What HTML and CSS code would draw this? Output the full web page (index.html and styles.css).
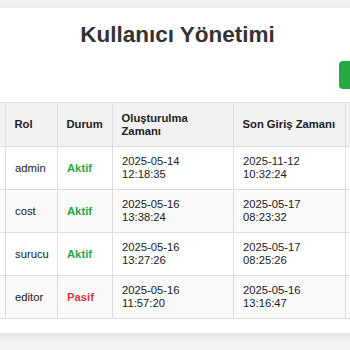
FILE: index.html
```html
<!DOCTYPE html>
<html lang="tr">
<head>
<meta charset="utf-8">
<title>Kullanıcı Yönetimi</title>
<link rel="stylesheet" href="styles.css">
</head>
<body>
<div class="page">
  <h1 class="title">Kullanıcı Yönetimi</h1>
  <div class="toolbar">
    <button class="btn-add">Yeni Kullanıcı Ekle</button>
  </div>
  <table class="users">
    <colgroup>
      <col class="c-id">
      <col class="c-name">
      <col class="c-role">
      <col class="c-status">
      <col class="c-created">
      <col class="c-login">
      <col class="c-actions">
    </colgroup>
    <thead>
      <tr>
        <th>ID</th>
        <th>Kullanıcı Adı</th>
        <th>Rol</th>
        <th>Durum</th>
        <th>Oluşturulma Zamanı</th>
        <th>Son Giriş Zamanı</th>
        <th>İşlemler</th>
      </tr>
    </thead>
    <tbody>
      <tr>
        <td>1</td><td>admin</td><td>admin</td>
        <td><span class="st active">Aktif</span></td>
        <td>2025-05-14 12:18:35</td><td>2025-11-12 10:32:24</td><td>Düzenle</td>
      </tr>
      <tr>
        <td>2</td><td>cost</td><td>cost</td>
        <td><span class="st active">Aktif</span></td>
        <td>2025-05-16 13:38:24</td><td>2025-05-17 08:23:32</td><td>Düzenle</td>
      </tr>
      <tr>
        <td>3</td><td>surucu</td><td>surucu</td>
        <td><span class="st active">Aktif</span></td>
        <td>2025-05-16 13:27:26</td><td>2025-05-17 08:25:26</td><td>Düzenle</td>
      </tr>
      <tr>
        <td>4</td><td>editor</td><td>editor</td>
        <td><span class="st passive">Pasif</span></td>
        <td>2025-05-16 11:57:20</td><td>2025-05-16 13:16:47</td><td>Düzenle</td>
      </tr>
    </tbody>
  </table>
</div>
</body>
</html>
```
FILE: styles.css
```css
html, body {
  overflow: hidden;
}
body {
  margin: 0;
  background: #f4f4f4;
  font-family: "Liberation Sans", Arial, sans-serif;
  color: #333;
  height: 350px;
}
.page {
  box-sizing: border-box;
  width: 625px;
  margin: 8px 0 0 -135px;
  padding: 14px 20px 14px;
  background: #fff;
  box-shadow: 0 2px 10px rgba(0, 0, 0, 0.1);
}
.title {
  margin: 0;
  text-align: center;
  font-size: 22.5px;
  font-weight: bold;
  color: #333;
  line-height: normal;
}
.toolbar {
  display: flex;
  justify-content: flex-end;
  margin: 13px 0 13px;
}
.btn-add {
  height: 28px;
  padding: 0 19px;
  border: 0;
  border-radius: 4px;
  background: #28a745;
  color: #fff;
  font-family: inherit;
  font-size: 11.25px;
}
.users {
  width: 100%;
  table-layout: fixed;
  border-collapse: collapse;
  font-size: 11.25px;
  color: #222;
}
.c-id { width: 40px; }
.c-name { width: 80px; }
.c-role { width: 52px; }
.c-status { width: 55px; }
.c-created { width: 121px; }
.c-login { width: 112px; }
.users th,
.users td {
  border: 1px solid #ddd;
  padding: 8px 9px;
  text-align: left;
  vertical-align: middle;
  line-height: 13px;
}
.users th {
  background: #f2f2f2;
  font-weight: bold;
  color: #222;
  padding: 8.5px 8.5px;
}
.users tbody tr:nth-child(even) {
  background: #f9f9f9;
}
.st {
  font-weight: bold;
}
.st.active {
  color: #28a745;
}
.st.passive {
  color: #dc3545;
}
```
